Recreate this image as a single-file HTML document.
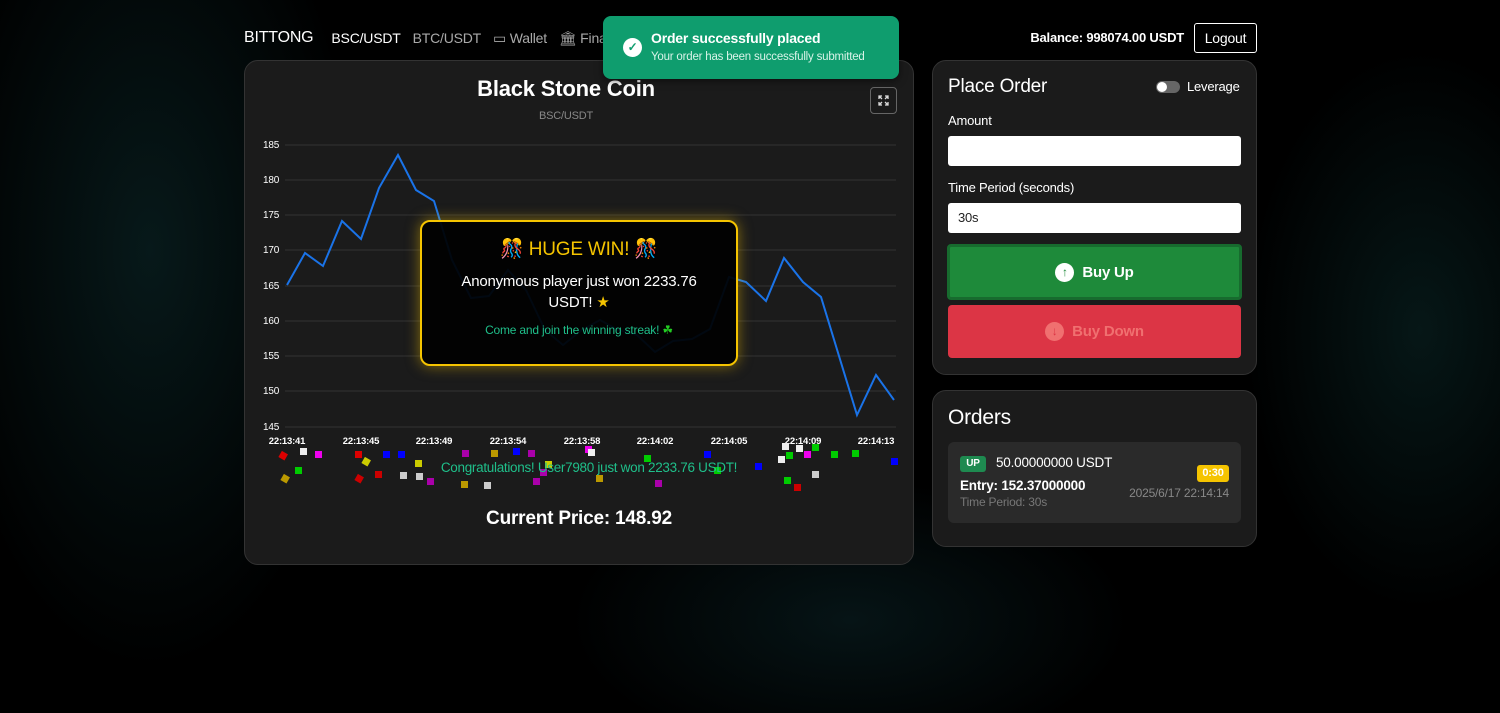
<!DOCTYPE html>
<html><head><meta charset="utf-8"><style>
*{box-sizing:border-box;margin:0;padding:0}
body{width:1500px;height:713px;overflow:hidden;font-family:"Liberation Sans",sans-serif;color:#fff;position:relative;letter-spacing:-0.2px;
background:radial-gradient(ellipse 300px 600px at 150px 250px,#07191a 0%,rgba(0,0,0,0) 70%),radial-gradient(ellipse 250px 400px at 1420px 330px,#061717 0%,rgba(0,0,0,0) 70%),radial-gradient(ellipse 400px 200px at 850px 620px,#061416 0%,rgba(0,0,0,0) 70%),#000}
.nav{position:absolute;top:29px;left:244px;font-size:14px;display:flex;gap:12px;align-items:center}
.nav .b{font-size:16px;margin-right:6px}
.nav .g{color:#aaa}
.bal{position:absolute;top:30px;right:316px;font-size:13px;font-weight:bold}
.logout{position:absolute;top:23px;left:1194px;width:63px;height:30px;border:1px solid #fff;border-radius:3px;font-size:14px;text-align:center;line-height:28px}
.card{position:absolute;background:#1b1b1b;border:1px solid #333;border-radius:14px}
.toast{position:absolute;left:603px;top:16px;width:296px;height:63px;background:#0f9d6e;border-radius:8px;box-shadow:0 2px 8px rgba(0,0,0,.5)}
.toast .t1{position:absolute;left:48px;top:14px;font-size:14px;font-weight:bold}
.toast .t2{position:absolute;left:48px;top:35px;font-size:11.5px;color:#d8f3e8}
.toast .ck{position:absolute;left:20px;top:22px;width:19px;height:19px;border-radius:50%;background:#fff;color:#0f9d6e;font-size:12px;text-align:center;line-height:19px;font-weight:bold}
.popup{position:absolute;left:420px;top:220px;width:318px;height:146px;background:rgba(0,0,0,.93);border:2px solid #f5c400;border-radius:10px;box-shadow:0 0 14px rgba(245,196,0,.5);text-align:center}
.fld{position:absolute;left:948px;width:293px;height:30px;background:#fff;border-radius:3px;color:#222;font-size:13px;line-height:30px;padding-left:10px}
.lbl{position:absolute;left:948px;font-size:14px}
.btn{position:absolute;left:948px;width:293px;display:flex;align-items:center;justify-content:center;gap:8px;font-size:15px;font-weight:bold;border-radius:4px}
.ic{display:inline-block;width:19px;height:19px;border-radius:50%;font-size:12px;line-height:19px;text-align:center}
</style></head><body>
<div class="nav"><span class="b">BITTONG</span><span>BSC/USDT</span><span class="g">BTC/USDT</span><span class="g">▭ Wallet</span><span class="g">🏛 Finance</span></div>
<div class="bal">Balance: 998074.00 USDT</div>
<div class="logout">Logout</div>

<div class="card" style="left:244px;top:60px;width:670px;height:505px"></div>
<div style="position:absolute;left:244px;width:644px;top:76px;text-align:center;font-size:22px;font-weight:bold">Black Stone Coin</div>
<div style="position:absolute;left:244px;width:644px;top:110px;text-align:center;font-size:11px;color:#888">BSC/USDT</div>
<div style="position:absolute;left:870px;top:87px;width:27px;height:27px;border:1px solid #666;border-radius:4px">
<svg width="25" height="25" viewBox="0 0 25 25" fill="none" stroke="#ddd" stroke-width="1.3"><path d="M8 11V8h3M8 8l3 3M17 11V8h-3M17 8l-3 3M8 14v3h3M8 17l3-3M17 14v3h-3M17 17l-3-3"/></svg></div>
<svg style="position:absolute;left:0;top:0" width="1500" height="713">
<g stroke="#333" stroke-width="1">
<line x1="285" y1="145" x2="896" y2="145"/><line x1="285" y1="180" x2="896" y2="180"/><line x1="285" y1="215" x2="896" y2="215"/><line x1="285" y1="250" x2="896" y2="250"/><line x1="285" y1="286" x2="896" y2="286"/><line x1="285" y1="321" x2="896" y2="321"/><line x1="285" y1="356" x2="896" y2="356"/><line x1="285" y1="391" x2="896" y2="391"/><line x1="285" y1="427" x2="896" y2="427"/></g>
<g fill="#fff" font-size="10" font-family="Liberation Sans">
<text x="263" y="148">185</text><text x="263" y="183">180</text><text x="263" y="218">175</text><text x="263" y="253">170</text><text x="263" y="289">165</text><text x="263" y="324">160</text><text x="263" y="359">155</text><text x="263" y="394">150</text><text x="263" y="430">145</text>
<g font-weight="bold" text-anchor="middle" font-size="9.5"><text x="287" y="444">22:13:41</text><text x="361" y="444">22:13:45</text><text x="434" y="444">22:13:49</text><text x="508" y="444">22:13:54</text><text x="582" y="444">22:13:58</text><text x="655" y="444">22:14:02</text><text x="729" y="444">22:14:05</text><text x="803" y="444">22:14:09</text><text x="876" y="444">22:14:13</text></g></g>
<polyline fill="none" stroke="#1a73e8" stroke-width="2" points="287,285 305,253 323,266 342,221 361,239 379,188 398,155 416,190 434,201 452,260 471,298 489,296 508,270 526,290 545,330 563,345 582,330 600,320 618,330 637,335 655,352 673,341 692,339 710,329 729,277 746,282 766,301 784,258 803,282 821,297 857,415 876,375 894,400"/>
<g>
<rect x="280" y="452" width="7" height="7" fill="#d00" transform="rotate(30 283 455)"/><rect x="300" y="448" width="7" height="7" fill="#eee"/><rect x="315" y="451" width="7" height="7" fill="#e0e"/><rect x="355" y="451" width="7" height="7" fill="#d00"/><rect x="383" y="451" width="7" height="7" fill="#00f"/><rect x="398" y="451" width="7" height="7" fill="#00f"/><rect x="363" y="458" width="7" height="7" fill="#cc0" transform="rotate(30 366 461)"/><rect x="415" y="460" width="7" height="7" fill="#cc0"/><rect x="295" y="467" width="7" height="7" fill="#0c0"/><rect x="282" y="475" width="7" height="7" fill="#b90" transform="rotate(30 285 478)"/><rect x="356" y="475" width="7" height="7" fill="#c00" transform="rotate(30 359 478)"/><rect x="375" y="471" width="7" height="7" fill="#c00"/><rect x="400" y="472" width="7" height="7" fill="#ccc"/><rect x="416" y="473" width="7" height="7" fill="#ccc"/><rect x="427" y="478" width="7" height="7" fill="#a0a"/><rect x="461" y="481" width="7" height="7" fill="#b90"/><rect x="484" y="482" width="7" height="7" fill="#ccc"/><rect x="462" y="450" width="7" height="7" fill="#a0a"/><rect x="491" y="450" width="7" height="7" fill="#b90"/><rect x="513" y="448" width="7" height="7" fill="#00f"/><rect x="528" y="450" width="7" height="7" fill="#a0a"/><rect x="585" y="446" width="7" height="7" fill="#e0e"/><rect x="588" y="449" width="7" height="7" fill="#eee"/><rect x="545" y="461" width="7" height="7" fill="#cc0"/><rect x="540" y="469" width="7" height="7" fill="#a0a"/><rect x="533" y="478" width="7" height="7" fill="#a0a"/><rect x="596" y="475" width="7" height="7" fill="#b90"/><rect x="644" y="455" width="7" height="7" fill="#0c0"/><rect x="655" y="480" width="7" height="7" fill="#a0a"/><rect x="704" y="451" width="7" height="7" fill="#00f"/><rect x="714" y="467" width="7" height="7" fill="#0c0"/><rect x="755" y="463" width="7" height="7" fill="#00f"/><rect x="778" y="456" width="7" height="7" fill="#eee"/><rect x="782" y="443" width="7" height="7" fill="#eee"/><rect x="796" y="445" width="7" height="7" fill="#eee"/><rect x="786" y="452" width="7" height="7" fill="#0c0"/><rect x="804" y="451" width="7" height="7" fill="#e0e"/><rect x="812" y="444" width="7" height="7" fill="#0c0"/><rect x="831" y="451" width="7" height="7" fill="#0c0"/><rect x="852" y="450" width="7" height="7" fill="#0c0"/><rect x="891" y="458" width="7" height="7" fill="#00f"/><rect x="784" y="477" width="7" height="7" fill="#0c0"/><rect x="794" y="484" width="7" height="7" fill="#c00"/><rect x="812" y="471" width="7" height="7" fill="#ccc"/>
</g>
<text x="589" y="472" text-anchor="middle" fill="#1fbf8a" font-size="13.5" font-family="Liberation Sans" letter-spacing="-0.3">Congratulations! User7980 just won 2233.76 USDT!</text>
</svg>
<div style="position:absolute;left:244px;width:670px;top:508px;text-align:center;font-size:19px;font-weight:bold">Current Price: 148.92</div>

<div class="popup">
<div style="margin-top:15px;font-size:19px;color:#f5c400">🎊 HUGE WIN! 🎊</div>
<div style="margin-top:10px;font-size:15px;line-height:21px">Anonymous player just won 2233.76<br>USDT! <span style="color:#f5c400">★</span></div>
<div style="margin-top:10px;font-size:12px;color:#1fbf8a">Come and join the winning streak! <span style="color:#2c2">☘</span></div>
</div>

<div class="card" style="left:932px;top:60px;width:325px;height:315px"></div>
<div style="position:absolute;left:948px;top:76px;font-size:19px">Place Order</div>
<div style="position:absolute;left:1156px;top:81px;width:24px;height:12px;border-radius:6px;background:#666"><div style="width:10px;height:10px;border-radius:50%;background:#fff;margin:1px"></div></div>
<div style="position:absolute;left:1187px;top:79px;font-size:13px">Leverage</div>
<div class="lbl" style="top:113px;font-size:13px">Amount</div>
<div class="fld" style="top:136px"></div>
<div class="lbl" style="top:180px;font-size:13px">Time Period (seconds)</div>
<div class="fld" style="top:203px">30s</div>
<div class="btn" style="left:947px;top:244px;width:295px;height:56px;background:#1e8a3a;border:3px solid #176b2e"><span class="ic" style="background:#fff;color:#1e8a3a">↑</span>Buy Up</div>
<div class="btn" style="top:305px;height:53px;background:#dc3545;color:#f07070"><span class="ic" style="background:#f07070;color:#dc3545">↓</span>Buy Down</div>

<div class="card" style="left:932px;top:390px;width:325px;height:157px"></div>
<div style="position:absolute;left:948px;top:406px;font-size:21px">Orders</div>
<div style="position:absolute;left:948px;top:442px;width:293px;height:81px;background:#2a2a2a;border-radius:6px"></div>
<div style="position:absolute;left:960px;top:456px;width:26px;height:16px;background:#1e8a50;border-radius:3px;font-size:10px;font-weight:bold;text-align:center;line-height:16px">UP</div>
<div style="position:absolute;left:996px;top:455px;font-size:13.5px">50.00000000 USDT</div>
<div style="position:absolute;left:960px;top:478px;font-size:13.5px;font-weight:bold">Entry: 152.37000000</div>
<div style="position:absolute;left:960px;top:495px;font-size:12px;color:#777">Time Period: 30s</div>
<div style="position:absolute;left:1197px;top:465px;width:32px;height:17px;background:#f5c400;border-radius:3px;font-size:11px;font-weight:bold;text-align:center;line-height:17px">0:30</div>
<div style="position:absolute;right:271px;top:486px;font-size:12px;color:#888">2025/6/17 22:14:14</div>

<div class="toast"><div class="ck">✓</div><div class="t1">Order successfully placed</div><div class="t2">Your order has been successfully submitted</div></div>
</body></html>
